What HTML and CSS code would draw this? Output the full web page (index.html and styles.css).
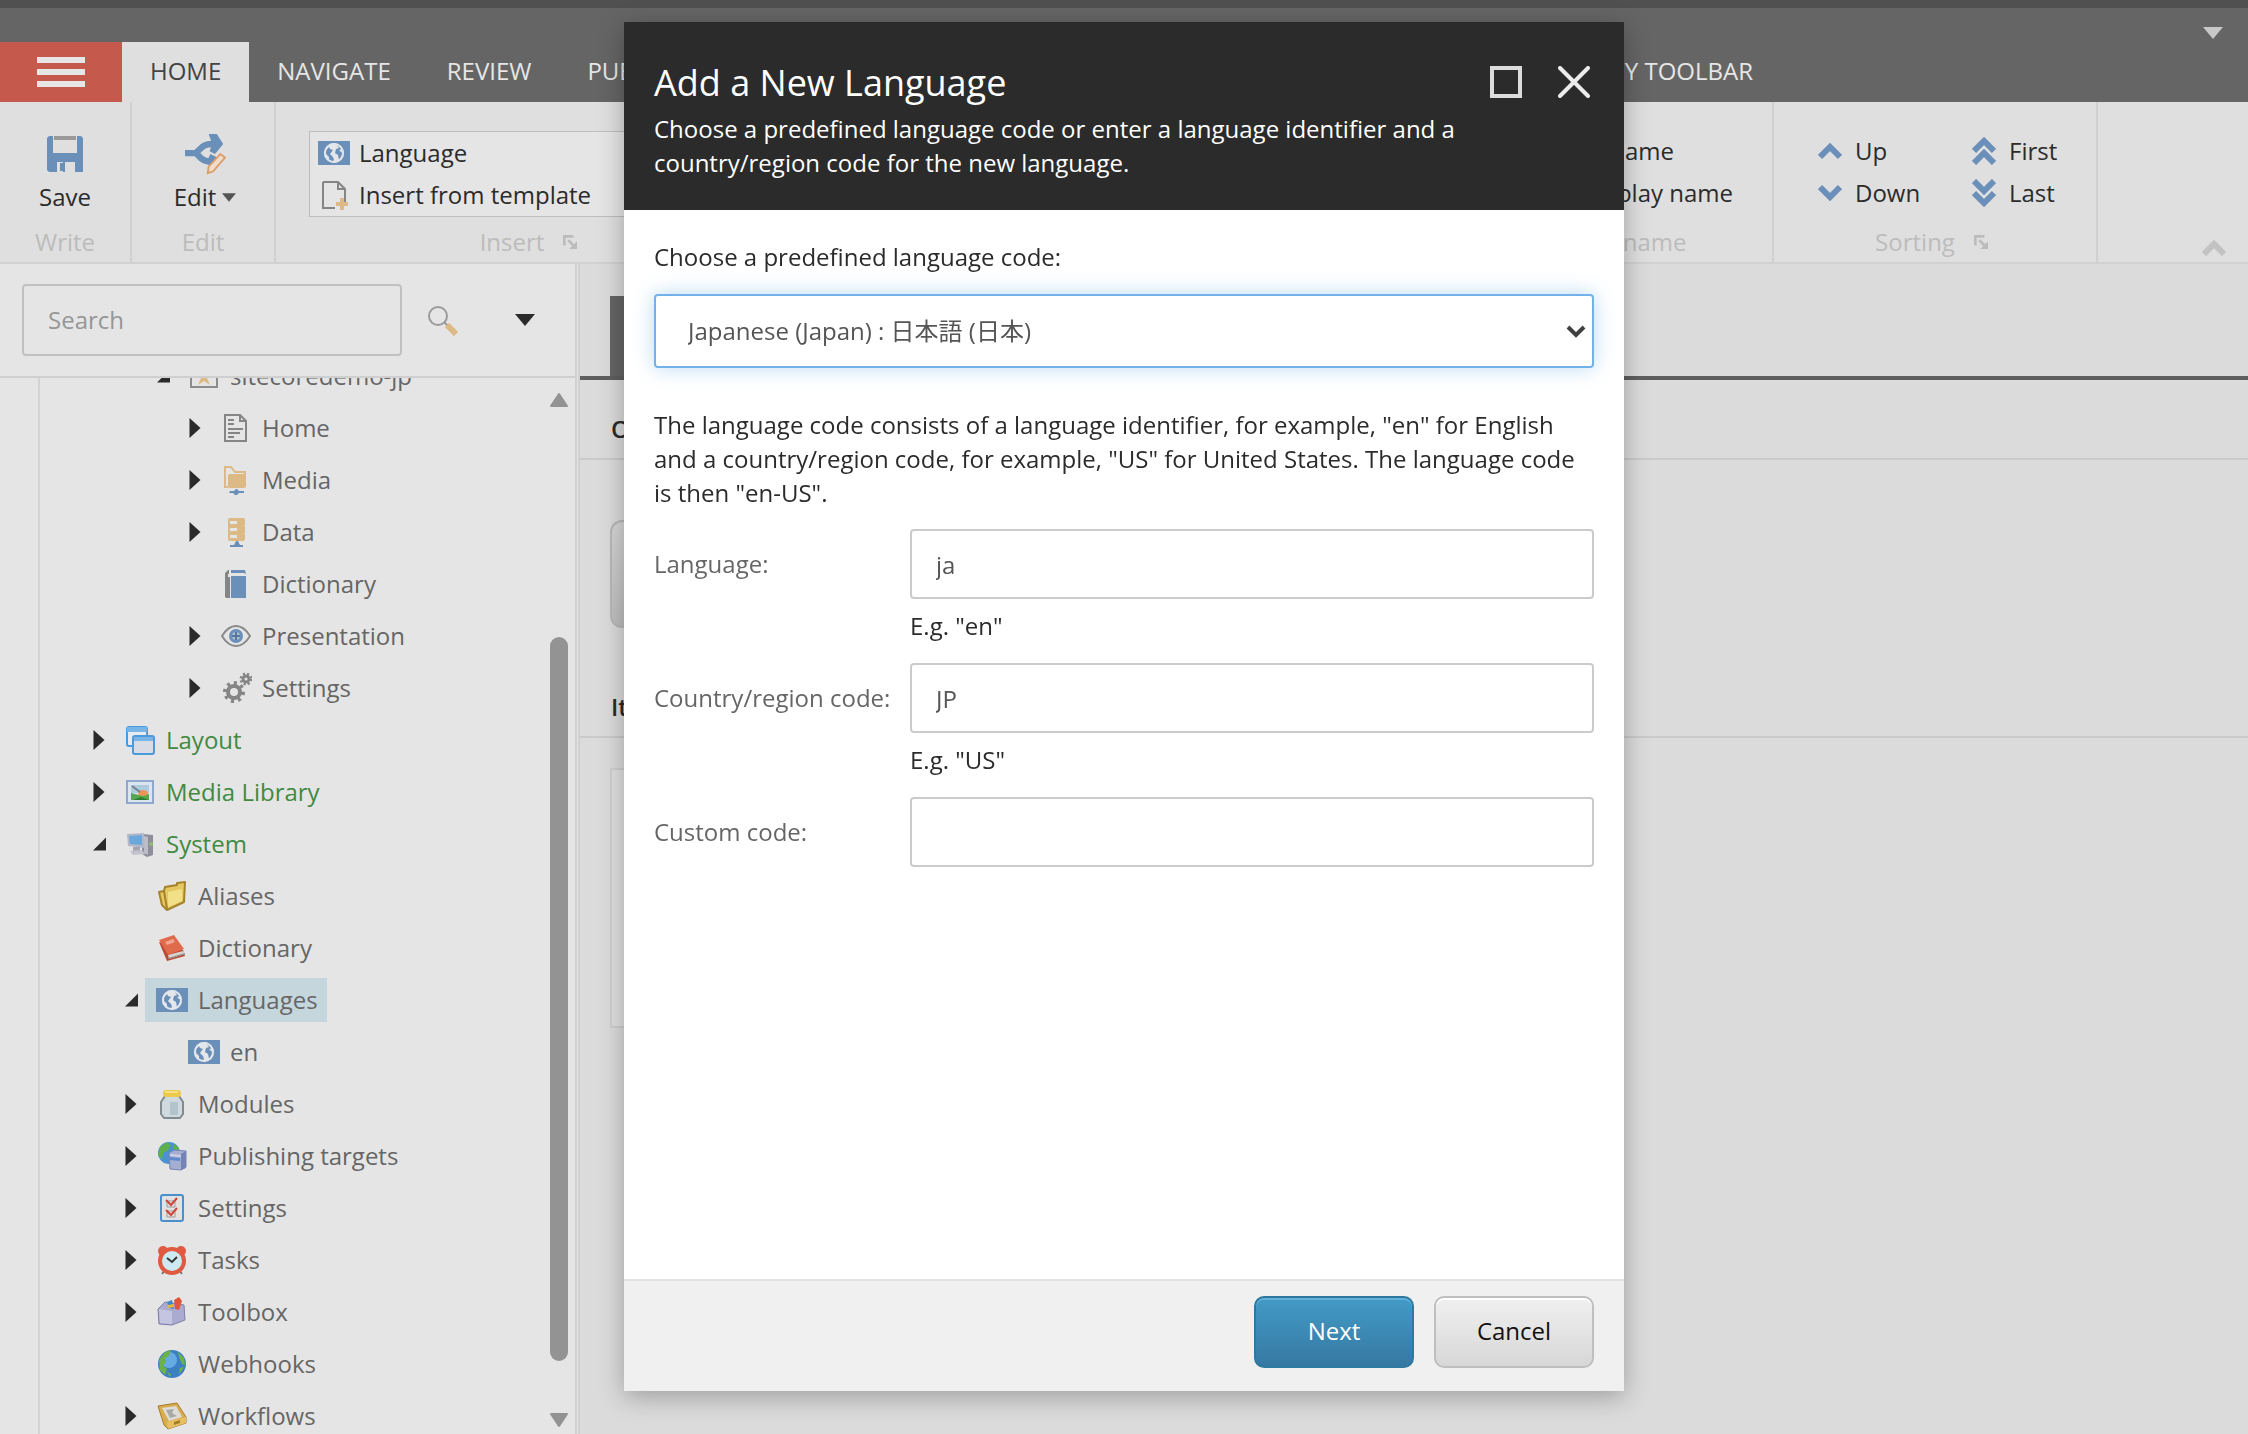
FILE: index.html
```html
<!DOCTYPE html>
<html lang="en">
<head>
<meta charset="utf-8">
<title>Content Editor</title>
<link rel="stylesheet" href="styles.css">
</head>
<body>
<svg class="sprite" aria-hidden="true">
  <symbol id="globe-card" viewBox="0 0 32 24"><path fill="#6a8fb8" d="M0 0h32v24H0z"/><circle cx="16" cy="12" r="10" fill="#e3e6ea"/><path fill="#6a8fb8" d="M8 9l3-3 1 2 3 1-3 4 3 3 1 3-2 3-3-3v-3l-4-4zM18 3l4 1 3 4-4 1 2 2 3 1-2 5-3 2-1-5-3-2 1-4 3-1z"/><circle cx="16" cy="12" r="9" fill="none" stroke="#e3e6ea" stroke-width="2"/></symbol>
  <symbol id="caret-right" viewBox="0 0 11 20"><path fill="#2a2a2a" d="M0 0l11 10L0 20z"/></symbol>
  <symbol id="caret-open" viewBox="0 0 12 12"><path fill="#2a2a2a" d="M12 0v12H0z"/></symbol>
  <symbol id="caret-down" viewBox="0 0 20 12"><path fill="currentColor" d="M0 0h20L10 12z"/></symbol>
  <symbol id="launcher" viewBox="0 0 16 16"><path fill="none" stroke="#bcbcbc" stroke-width="3" d="M1.500 12V1.500H12M6 6l6 6"/><path fill="#bcbcbc" d="M16 7v9H7z"/></symbol>
  <symbol id="chev-up" viewBox="0 0 24 28"><path fill="none" stroke="#6a8fb8" stroke-width="6" d="M2 20l10-10 10 10"/></symbol>
  <symbol id="chev-down" viewBox="0 0 24 28"><path fill="none" stroke="#6a8fb8" stroke-width="6" d="M2 8l10 10L22 8"/></symbol>
  <symbol id="chev-up2" viewBox="0 0 24 28"><path fill="none" stroke="#6a8fb8" stroke-width="6" d="M2 14L12 4l10 10M2 26l10-10 10 10"/></symbol>
  <symbol id="chev-down2" viewBox="0 0 24 28"><path fill="none" stroke="#6a8fb8" stroke-width="6" d="M2 2l10 10L22 2M2 14l10 10 10-10"/></symbol>
  <symbol id="t-site" viewBox="0 0 32 32"><path fill="none" stroke="#8c8c8c" stroke-width="2" d="M3 5h26v22H3z"/><path fill="#dcb985" d="M16 8l2 6h6l-5 4 3 7-6-4-6 4 3-7-5-4h6z"/></symbol>
  <symbol id="t-page" viewBox="0 0 32 32"><path fill="none" stroke="#858585" stroke-width="2" d="M5 3h15l6 6v20H5zM20 3v6h6"/><path stroke="#858585" stroke-width="2" d="M8 8h6M8 12h6M8 17h15M8 21h12M8 25h6"/></symbol>
  <symbol id="t-media" viewBox="0 0 32 32"><path fill="none" stroke="#dcb985" stroke-width="2" d="M8 23H5V3h6l4 5h10v3"/><rect x="8" y="10" width="18" height="14" rx="2" fill="#dcb985"/><path fill="#6a8fb8" d="M10 27h4l2-2h1l2 2h5v2h-5l-2 2h-2l-2-2h-4z"/></symbol>
  <symbol id="t-data" viewBox="0 0 32 32"><rect x="8" y="2" width="17" height="23" rx="2" fill="#dcb985"/><path fill="#e5e5e5" d="M10 5h7v3h-7zM10 12h7v3h-7zM10 19h7v3h-7zM24 9h2v1h-2zM24 17h2v1h-2z"/><path fill="#6a8fb8" d="M10 29h13v2H10zM16 25h2l2 4h-6z"/></symbol>
  <symbol id="t-book" viewBox="0 0 32 32"><path fill="#858585" d="M5 5l3-3h1v4H8v24H6l-1-1z"/><path fill="#6a8fb8" d="M11 8h15v22H11zM11 2h14l1 4-2-1H11z"/><path fill="#858585" d="M8 9h2v21H8z"/></symbol>
  <symbol id="t-eye" viewBox="0 0 32 32"><path fill="none" stroke="#8a8a8a" stroke-width="2" d="M2 16q6-10 14-10t14 10q-6 10-14 10T2 16z"/><circle cx="16" cy="16" r="7" fill="#6a8fb8"/><circle cx="16" cy="16" r="4" fill="#a9bdd3"/><path stroke="#55779e" stroke-width="2" d="M16 12v8M12 16h8"/></symbol>
  <symbol id="t-gears" viewBox="0 0 32 32"><g fill="none" stroke="#858585"><circle cx="14" cy="20" r="6" stroke-width="4"/><circle cx="14" cy="20" r="9" stroke-width="4" stroke-dasharray="3 4"/><circle cx="26" cy="7" r="3" stroke-width="3"/><circle cx="26" cy="7" r="5" stroke-width="3" stroke-dasharray="2 2"/></g></symbol>
  <symbol id="t-layout" viewBox="0 0 32 32"><rect x="3" y="3" width="20" height="19" rx="2" fill="#e6ebf2" stroke="#4a9ade" stroke-width="2"/><path fill="#79b4e6" d="M3 3h20v5H3z"/><rect x="9" y="12" width="21" height="18" rx="2" fill="#d9dce4" stroke="#4a9ade" stroke-width="2"/><path fill="#79b4e6" d="M10 13h19v4H10z"/></symbol>
  <symbol id="t-image" viewBox="0 0 32 32"><path fill="#dce4f0" stroke="#8ea8ce" stroke-width="2" d="M3 5h26v22H3z"/><path fill="#aecbdd" d="M7 9h18v8H7z"/><path fill="#5aa84c" d="M7 17l8 2 10-1v6H7z"/><path fill="#2f7d34" d="M9 24l8-3 8 3z"/><ellipse cx="19" cy="17" rx="5" ry="3" fill="#ef9458"/><path stroke="#77828e" stroke-width="2" d="M8 10l8 6"/></symbol>
  <symbol id="t-system" viewBox="0 0 32 32"><path fill="#8d8d9c" d="M18 6l11 1v20l-6 2-5-3z"/><path fill="#bdbdc9" d="M20 8l4 1v18l-4-2z"/><path fill="#b3b7c8" d="M3 6l17-1v15L4 18z"/><path fill="#6aa8dc" d="M5 8l13-1v10L6 16z"/><path fill="#a6a6b2" d="M9 19h7v4H9z"/><path fill="#c2c2cc" d="M6 23l12-1 3 4-12 1z"/><circle cx="27" cy="16" r="2" fill="#8cc06c"/></symbol>
  <symbol id="t-folder" viewBox="0 0 32 32"><path fill="#e6c860" stroke="#a5822c" stroke-width="2" stroke-linejoin="round" d="M3 12l5-1 1-4 12-2V3l8-1-1 20L11 30 6 25z"/><path fill="#f2e088" d="M12 12l14-3v12l-14 6z"/><path stroke="#a5822c" stroke-width="2" d="M8 11l3 18" fill="none"/></symbol>
  <symbol id="t-redbook" viewBox="0 0 32 32"><path fill="#b84a32" d="M3 10l8 19 18-5-2-6z"/><path fill="#d8d4d0" d="M12 23l15-4 2 3-16 5z"/><path fill="#8e8a88" d="M12 26l17-5v1l-16 5z"/><path fill="#e06a4c" d="M3 8l15-5 10 14-16 6z"/><path fill="#f0a58f" d="M9 10l8-3 2 3-8 3z"/></symbol>
  <symbol id="t-jar" viewBox="0 0 32 32"><path fill="#cfd9de" stroke="#808b92" stroke-width="2" stroke-linejoin="round" d="M9 8h14l4 6v12l-3 4H8l-3-4V14z"/><path fill="#b2c3cc" d="M14 14h8v13h-8z"/><rect x="7" y="2" width="18" height="7" rx="3" fill="#ecca4c"/><path fill="#f5e08b" d="M9 3h13v2H9z"/></symbol>
  <symbol id="t-publish" viewBox="0 0 32 32"><circle cx="13" cy="13" r="11" fill="#4a92d2"/><path fill="#5fb04c" d="M4 7l7-5 4 3-3 5-5 3-1 7-4-5zM18 4l5 4-1 4-5-3z"/><path fill="#a4aed2" stroke="#7682b4" d="M13 13l5-3 12 1v16l-5 3-11-1z"/><path fill="#5c88cc" d="M14 17l10 1v3l-10-1z"/><path fill="#cdd2e8" d="M14 14l11 1v2l-11-1z"/><path fill="#7682b4" d="M25 14l5-3v17l-5 2z"/></symbol>
  <symbol id="t-checks" viewBox="0 0 32 32"><rect x="5" y="3" width="22" height="26" rx="2" fill="#e2e2e2" stroke="#4a90cc" stroke-width="2"/><path fill="none" stroke="#9b9b9b" d="M11 9h8v6h-8zM11 19h8v6h-8z"/><path fill="none" stroke="#cf4436" stroke-width="2" d="M10 8l5 5 6-7M10 18l5 5 6-7"/></symbol>
  <symbol id="t-clock" viewBox="0 0 32 32"><circle cx="7" cy="7" r="5" fill="#df5a40"/><circle cx="25" cy="7" r="5" fill="#df5a40"/><path stroke="#777" stroke-width="2" d="M9 26l-3 4M23 26l3 4"/><circle cx="16" cy="17" r="12" fill="#cdeaf2" stroke="#df5a40" stroke-width="4"/><path fill="none" stroke="#333" stroke-width="2" d="M11 14l5 4 5-5"/></symbol>
  <symbol id="t-toolbox" viewBox="0 0 32 32"><path fill="#ababd2" stroke="#7f7fac" stroke-linejoin="round" d="M2 13l7-7 19 3 1 15-13 5-13-1z"/><path fill="#c5c5e2" d="M3 13l13 2v13L4 27z"/><path fill="#3f86c8" d="M11 6l5-2 2 9-5-1z"/><path fill="#e9b743" d="M12 9l6-1v3l-6 1z"/><path fill="#e0563c" d="M18 4l5-3 3 4-3 9-4-1z"/></symbol>
  <symbol id="t-globe" viewBox="0 0 32 32"><circle cx="16" cy="16" r="14" fill="#3c80c4"/><circle cx="13" cy="12" r="8" fill="#66abe2"/><path fill="#6cb14a" d="M3 12l6-8 6-2-2 6-4 2 1 4-3 4 4 3-2 6-5-5zM22 4l6 6 1 7-3-1-3-7zM24 20l4-1-5 8zM11 24l4 2-1 3z"/></symbol>
  <symbol id="t-workflow" viewBox="0 0 32 32"><path fill="#d9ad4d" stroke="#a57d2a" stroke-linejoin="round" d="M2 6l19-3 9 14v6L12 29 8 25z"/><path fill="#dddcd8" d="M6 8l14-2 6 11-13 4z"/><path fill="#a8a8a4" d="M10 10l8-1-2 4 5 3-7 2z"/><path fill="#e6bf62" d="M11 22l19-5v6l-18 6z"/><path fill="#a57d2a" d="M18 22l6-2v3l-6 2z"/></symbol>
</svg>

<div class="app">
  <header class="topbar">
    <div class="strip"></div>
    <button class="collapse-top" aria-label="Toggle header"><svg width="20" height="14"><use href="#caret-down"/></svg></button>
    <nav class="tabs">
      <button class="menu" aria-label="Menu"><span class="bar"></span><span class="bar"></span><span class="bar"></span></button>
      <a class="tab active" href="#">HOME</a>
      <a class="tab" href="#">NAVIGATE</a>
      <a class="tab" href="#">REVIEW</a>
      <a class="tab" href="#">PUBLISH</a>
      <a class="tab" href="#">VERSIONS</a>
      <a class="tab" href="#">CONFIGURE</a>
      <a class="tab" href="#">PRESENTATION</a>
      <a class="tab" href="#">SECURITY</a>
      <a class="tab" href="#">VIEW</a>
      <a class="tab" href="#">MY TOOLBAR</a>
    </nav>
  </header>

  <section class="ribbon">
    <div class="group write">
      <button class="big"><svg width="40" height="40" viewBox="0 0 40 40"><path fill="#6a8fb8" d="M2 4l2-2h4v17h24V2h4l2 2v34h-7V27H11v11H4l-2-2z"/><path fill="#6a8fb8" d="M2 19h36v8H2zM11 26h20v12H11z"/><path fill="#dfdfdf" d="M12 28h6v10h-6zM20 28h10v10H20z"/><path fill="#6a8fb8" d="M15 29h4v8h-4z"/><path fill="#999" d="M9 2h22v4H9z"/></svg><span>Save</span></button>
      <div class="caption">Write</div>
    </div>
    <div class="group edit">
      <button class="big"><svg width="42" height="44" viewBox="0 0 46 44"><path fill="none" stroke="#6a8fb8" stroke-width="7" d="M1 21h10M36 11h-6q-8 0-13 6l-4 4 6 6q5 4 15 4"/><path fill="#6a8fb8" d="M27 0h9l7 11-9 11-6-3 3-8zM29 22l8 4-6 10-7-4z"/><path fill="#f0dcc8" stroke="#dc9c68" stroke-width="2" d="M26 43l1-7 13-14 5 4-13 15z"/></svg><span>Edit<svg class="drop" width="14" height="9"><use href="#caret-down"/></svg></span></button>
      <div class="caption">Edit</div>
    </div>
    <div class="group insert">
      <div class="insert-list">
        <button class="item"><svg width="32" height="24"><use href="#globe-card"/></svg>Language</button>
        <button class="item"><svg width="32" height="32" viewBox="0 0 32 32"><path fill="none" stroke="#858585" stroke-width="2" d="M5 3h15l7 7v13M20 3v7h7M17 29H5V3"/><path fill="#dcb985" d="M22 19h4v4h4v4h-4v4h-4v-4h-4v-4h4z"/></svg>Insert from template</button>
      </div>
      <div class="caption">Insert <svg width="16" height="16"><use href="#launcher"/></svg></div>
    </div>
    <div class="group operations"></div>
    <div class="group rename">
      <div class="links">
        <button class="item">Rename</button>
        <button class="item">Display name</button>
      </div>
      <div class="caption">Rename</div>
    </div>
    <div class="group sorting">
      <div class="links two">
        <button class="item"><svg width="24" height="28"><use href="#chev-up"/></svg>Up</button>
        <button class="item"><svg width="24" height="28"><use href="#chev-up2"/></svg>First</button>
        <button class="item"><svg width="24" height="28"><use href="#chev-down"/></svg>Down</button>
        <button class="item"><svg width="24" height="28"><use href="#chev-down2"/></svg>Last</button>
      </div>
      <div class="caption">Sorting <svg width="16" height="16"><use href="#launcher"/></svg></div>
    </div>
    <button class="collapse-ribbon" aria-label="Collapse ribbon"><svg width="24" height="16" viewBox="0 0 24 16"><path fill="none" stroke="#c2c2c2" stroke-width="6" d="M2 14L12 4l10 10"/></svg></button>
  </section>

  <div class="main">
    <aside class="sidebar">
      <form class="search">
        <input type="text" placeholder="Search" aria-label="Search">
        <button type="button" aria-label="Search"><svg width="32" height="32" viewBox="0 0 32 32"><circle cx="11" cy="12" r="9" fill="none" stroke="#9a9a9a" stroke-width="2"/><path stroke="#9a9a9a" stroke-width="2" d="M17 18l4 4"/><path stroke="#dcb985" stroke-width="6" d="M20 21l9 9"/></svg></button>
        <button type="button" aria-label="Search options"><svg width="20" height="12"><use href="#caret-down"/></svg></button>
      </form>
      <div class="tree-wrap">
        <ul class="tree">
          <li class="l3"><svg class="open"><use href="#caret-open"/></svg><a href="#"><svg class="ico"><use href="#t-site"/></svg>sitecoredemo-jp</a></li>
          <li class="l4"><svg class="arrow"><use href="#caret-right"/></svg><a href="#"><svg class="ico"><use href="#t-page"/></svg>Home</a></li>
          <li class="l4"><svg class="arrow"><use href="#caret-right"/></svg><a href="#"><svg class="ico"><use href="#t-media"/></svg>Media</a></li>
          <li class="l4"><svg class="arrow"><use href="#caret-right"/></svg><a href="#"><svg class="ico"><use href="#t-data"/></svg>Data</a></li>
          <li class="l4"><span class="arrow"></span><a href="#"><svg class="ico"><use href="#t-book"/></svg>Dictionary</a></li>
          <li class="l4"><svg class="arrow"><use href="#caret-right"/></svg><a href="#"><svg class="ico"><use href="#t-eye"/></svg>Presentation</a></li>
          <li class="l4"><svg class="arrow"><use href="#caret-right"/></svg><a href="#"><svg class="ico"><use href="#t-gears"/></svg>Settings</a></li>
          <li class="l1"><svg class="arrow"><use href="#caret-right"/></svg><a href="#"><svg class="ico"><use href="#t-layout"/></svg>Layout</a></li>
          <li class="l1"><svg class="arrow"><use href="#caret-right"/></svg><a href="#"><svg class="ico"><use href="#t-image"/></svg>Media Library</a></li>
          <li class="l1"><svg class="open"><use href="#caret-open"/></svg><a href="#"><svg class="ico"><use href="#t-system"/></svg>System</a></li>
          <li class="l2"><span class="arrow"></span><a href="#"><svg class="ico"><use href="#t-folder"/></svg>Aliases</a></li>
          <li class="l2"><span class="arrow"></span><a href="#"><svg class="ico"><use href="#t-redbook"/></svg>Dictionary</a></li>
          <li class="l2"><svg class="open"><use href="#caret-open"/></svg><a class="selected" href="#"><svg class="ico"><use href="#globe-card"/></svg>Languages</a></li>
          <li class="l3"><span class="arrow"></span><a href="#"><svg class="ico"><use href="#globe-card"/></svg>en</a></li>
          <li class="l2"><svg class="arrow"><use href="#caret-right"/></svg><a href="#"><svg class="ico"><use href="#t-jar"/></svg>Modules</a></li>
          <li class="l2"><svg class="arrow"><use href="#caret-right"/></svg><a href="#"><svg class="ico"><use href="#t-publish"/></svg>Publishing targets</a></li>
          <li class="l2"><svg class="arrow"><use href="#caret-right"/></svg><a href="#"><svg class="ico"><use href="#t-checks"/></svg>Settings</a></li>
          <li class="l2"><svg class="arrow"><use href="#caret-right"/></svg><a href="#"><svg class="ico"><use href="#t-clock"/></svg>Tasks</a></li>
          <li class="l2"><svg class="arrow"><use href="#caret-right"/></svg><a href="#"><svg class="ico"><use href="#t-toolbox"/></svg>Toolbox</a></li>
          <li class="l2"><span class="arrow"></span><a href="#"><svg class="ico"><use href="#t-globe"/></svg>Webhooks</a></li>
          <li class="l2"><svg class="arrow"><use href="#caret-right"/></svg><a href="#"><svg class="ico"><use href="#t-workflow"/></svg>Workflows</a></li>
        </ul>
        <div class="scrollbar">
          <svg width="20" height="16" viewBox="0 0 20 16"><path fill="#939393" stroke="#939393" stroke-width="2" stroke-linejoin="round" d="M10 2l8 12H2z"/></svg>
          <div class="track"><div class="thumb"></div></div>
          <svg width="20" height="16" viewBox="0 0 20 16"><path fill="#939393" stroke="#939393" stroke-width="2" stroke-linejoin="round" d="M10 14L2 2h16z"/></svg>
        </div>
      </div>
    </aside>
    <main class="content">
      <div class="doc-tabs"><div class="doc-tab"></div></div>
      <h2>Options</h2>
      <div class="block"><div class="tile"></div></div>
      <h2>Items</h2>
      <div class="block"><div class="panel"></div></div>
    </main>
  </div>
</div>

<div class="overlay">
  <div class="dialog" role="dialog" aria-labelledby="dlg-title">
    <header class="dlg-head">
      <div class="dlg-text">
        <h1 id="dlg-title">Add a New Language</h1>
        <p>Choose a predefined language code or enter a language identifier and a country/region code for the new language.</p>
      </div>
      <div class="dlg-tools">
        <button aria-label="Maximize"><svg width="32" height="32" viewBox="0 0 32 32"><path fill="none" stroke="#dcdcdc" stroke-width="4" d="M2 2h28v28H2z"/></svg></button>
        <button aria-label="Close"><svg width="32" height="32" viewBox="0 0 32 32"><path stroke="#ececec" stroke-width="4" stroke-linecap="round" d="M2 2l28 28M30 2L2 30"/></svg></button>
      </div>
    </header>
    <div class="dlg-body">
      <label for="predef">Choose a predefined language code:</label>
      <div class="select-box">
        <select id="predef"><option>Japanese (Japan) : 日本語 (日本)</option></select>
        <svg width="20" height="14" viewBox="0 0 20 14"><path fill="none" stroke="#404040" stroke-width="4" d="M2 3l8 8 8-8"/></svg>
      </div>
      <p>The language code consists of a language identifier, for example, "en" for English and a country/region code, for example, "US" for United States. The language code is then "en-US".</p>
      <div class="fields">
        <label for="lang">Language:</label><input id="lang" type="text" value="ja">
        <span class="hint">E.g. "en"</span>
        <label for="region">Country/region code:</label><input id="region" type="text" value="JP">
        <span class="hint">E.g. "US"</span>
        <label for="custom">Custom code:</label><input id="custom" type="text">
      </div>
    </div>
    <footer class="dlg-foot">
      <button class="btn primary">Next</button>
      <button class="btn">Cancel</button>
    </footer>
  </div>
</div>
</body>
</html>
```
FILE: styles.css
```css
* { box-sizing: border-box; }
body {
  margin: 0;
  height: 100vh;
  overflow: hidden;
  font: 24px/32px "Open Sans", "Noto Sans CJK JP", sans-serif;
  color: #2b2b2b;
  background: #dbdbdb;
}
button, input, select { font: inherit; color: inherit; margin: 0; }
button { padding: 0; border: 0; background: none; }
a { color: inherit; text-decoration: none; }
svg { display: block; flex: none; }
h1, h2, p, ul { margin: 0; padding: 0; font-weight: 400; }
.sprite { position: absolute; width: 0; height: 0; }

.app { display: flex; flex-direction: column; height: 100vh; }

/* top bar */
.topbar { display: flex; flex-direction: column; flex: none; background: #656565; color: #e6e6e6; }
.strip { height: 8px; background: #505050; }
.collapse-top { align-self: flex-end; height: 34px; margin-right: 25px; padding-top: 16px; color: #c8c8c8; }
.tabs { display: flex; height: 60px; overflow: hidden; }
.menu { display: flex; flex-direction: column; justify-content: center; align-items: center; gap: 6px; width: 122px; flex: none; background: #c5594b; }
.bar { width: 48px; height: 6px; background: #e6e6e6; }
.tab { display: flex; align-items: center; flex: none; padding: 0 28px 2px; white-space: nowrap; }
.tab.active { background: #dfdfdf; color: #444; }

/* ribbon */
.ribbon { display: flex; flex: none; height: 162px; overflow: hidden; background: #dfdfdf; border-bottom: 2px solid #d1d1d1; }
.group { display: flex; flex-direction: column; justify-content: space-between; flex: none; padding-bottom: 4px; border-right: 2px solid #d0d0d0; }
.write { width: 132px; }
.edit { width: 144px; }
.insert { width: 508px; }
.operations { width: 725px; }
.rename { width: 265px; }
.sorting { width: 324px; }
.big { display: flex; flex-direction: column; align-items: center; gap: 7px; padding-top: 32px; }
.big > svg { height: 40px; overflow: visible; }
.edit .big { padding-left: 4px; }
.big span { display: flex; align-items: center; gap: 6px; }
.drop { color: #555; }
.caption { display: flex; justify-content: center; align-items: center; gap: 18px; color: #bcbcbc; }
.caption svg { height: 14px; overflow: visible; }
.insert-list { display: flex; flex-direction: column; margin: 29px 33px 0; border: 1px solid #bdbdbd; background: #e5e5e5; }
.insert-list .item { gap: 9px; padding-left: 8px; }
.item { display: flex; align-items: center; gap: 13px; height: 42px; white-space: nowrap; }
.links { padding: 28px 0 0 73px; }
.links.two { display: grid; grid-template-columns: 154px auto; padding-left: 44px; }
.sorting .caption { padding-right: 6px; }
.collapse-ribbon { align-self: flex-end; margin: 0 22px 6px auto; }

/* sidebar */
.main { display: flex; flex: 1; min-height: 0; }
.sidebar { display: flex; flex-direction: column; flex: none; width: 580px; background: #e5e5e5; border-right: 5px double #d0d0d0; }
.search { display: flex; align-items: center; flex: none; height: 114px; padding-left: 22px; border-bottom: 2px solid #cfcfcf; }
.search input { width: 380px; height: 72px; padding: 0 24px 2px; border: 2px solid #c0c0c0; border-radius: 4px; background: #e5e5e5; outline: 0; }
.search input::placeholder { color: #969696; opacity: 1; }
.search button { margin-left: 25px; }
.search button + button { margin-left: 56px; }
.tree-wrap { display: flex; flex: 1; min-height: 0; margin-left: 38px; border-left: 2px solid #d4d4d4; overflow: hidden; }
.tree { flex: 1; margin-top: -28px; list-style: none; color: #666; }
.tree li { display: flex; align-items: center; height: 52px; }
.tree a { display: flex; align-items: center; gap: 10px; height: 44px; padding: 0 9px 0 11px; white-space: nowrap; }
.tree a.selected { background: #c6d6dd; }
.ico { width: 32px; height: 32px; }
.arrow { width: 12px; height: 20px; margin-right: 8px; flex: none; }
.open { width: 13px; height: 14px; margin-right: 7px; }
.l1 { padding-left: 53px; color: #418a41; }
.l2 { padding-left: 85px; }
.l3 { padding-left: 117px; }
.l4 { padding-left: 149px; }
.scrollbar { display: flex; flex-direction: column; flex: none; width: 20px; margin-right: 6px; padding: 14px 0 6px; }
.track { flex: 1; display: flex; justify-content: center; padding: 229px 0 51px; }
.thumb { width: 18px; border-radius: 9px; background: #939393; }

/* content */
.content { flex: 1; min-width: 0; }
.doc-tabs { display: flex; align-items: flex-end; height: 116px; padding-left: 30px; border-bottom: 4px solid #5e5e5e; }
.doc-tab { width: 160px; height: 80px; background: #656565; }
.content h2 { height: 80px; padding: 33px 31px 0; border-bottom: 2px solid #cacaca; font-size: 24px; font-weight: 600; }
.block { padding: 60px 30px 30px; }
.block + h2 + .block { padding-top: 30px; }
.tile { width: 120px; height: 108px; border: 2px solid #b8b8b8; border-radius: 12px; background: linear-gradient(#d6d6d6, #bebebe); }
.panel { width: 480px; height: 260px; border: 2px solid #cfcfcf; background: #e0e0e0; }

/* dialog */
.overlay { position: fixed; inset: 0; display: flex; justify-content: center; padding: 22px 0 43px; }
.dialog { display: flex; flex-direction: column; width: 1000px; background: #fff; box-shadow: 0 6px 24px rgba(0, 0, 0, .28); }
.dlg-head { display: flex; justify-content: space-between; flex: none; height: 188px; padding: 36px 34px 0 30px; background: #2b2b2b; color: #fff; }
.dlg-text { width: 820px; }
.dlg-head h1 { font-size: 36px; line-height: 50px; }
.dlg-head p, .dlg-body p { line-height: 34px; }
.dlg-head p { padding-top: 4px; }
.dlg-tools { display: flex; align-items: flex-start; gap: 36px; padding-top: 8px; }
.dlg-body { flex: 1; padding: 31px 30px 0; }
.dlg-body > label { display: block; }
.select-box { position: relative; margin: 21px 0 40px; }
.select-box svg { position: absolute; right: 8px; top: 30px; pointer-events: none; }
.select-box select { display: block; width: 100%; height: 74px; padding: 0 32px; appearance: none; border: 2px solid #72b2e8; border-radius: 4px; background: #fff; color: #555; outline: 0; box-shadow: 0 0 20px rgba(102, 175, 233, .45); }
.fields { display: grid; grid-template-columns: 256px 1fr; align-items: center; padding-top: 19px; color: #666; }
.fields input { width: 100%; height: 70px; padding: 0 24px; border: 2px solid #cbcbcb; border-radius: 4px; background: #fff; color: #555; outline: 0; }
.hint { grid-column: 2; height: 64px; padding-top: 11px; color: #2b2b2b; }
.dlg-foot { display: flex; justify-content: flex-end; gap: 20px; flex: none; height: 112px; padding: 15px 30px 0; border-top: 2px solid #e2e2e2; background: #f0f0f0; }
.btn { width: 160px; height: 72px; padding-bottom: 2px; border: 2px solid #bfbfbf; border-radius: 10px; background: linear-gradient(#f0f0f0, #d7d7d7); color: #111; box-shadow: inset 0 2px 0 #fff; }
.btn.primary { border-color: #2f789f; background: linear-gradient(#439ac6, #3579a3); color: #fff; box-shadow: inset 0 2px 0 #62afd7; }
```
